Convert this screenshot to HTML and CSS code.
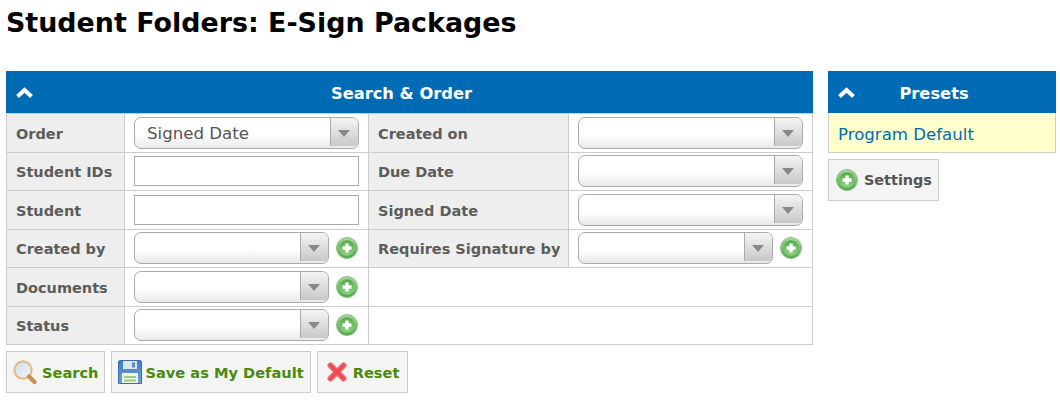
FILE: index.html
```html
<!DOCTYPE html>
<html lang="en">
<head>
<meta charset="utf-8">
<title>Student Folders: E-Sign Packages</title>
<link rel="stylesheet" href="styles.css">
</head>
<body>
<svg class="defs" width="0" height="0" aria-hidden="true">
  <defs>
    <linearGradient id="gr" x1="0" y1="0" x2="0" y2="1"><stop offset="0" stop-color="#a8d89e"/><stop offset="1" stop-color="#4fa548"/></linearGradient>
    <linearGradient id="gi" x1="0" y1="0" x2="0" y2="1"><stop offset="0" stop-color="#52ab48"/><stop offset="1" stop-color="#8fd283"/></linearGradient>
    <linearGradient id="lens" x1="0" y1="0" x2="1" y2="1"><stop offset="0" stop-color="#c9d9e8"/><stop offset="1" stop-color="#f7fafc"/></linearGradient>
    <linearGradient id="disk" x1="0" y1="0" x2="0" y2="1"><stop offset="0" stop-color="#3f7cc6"/><stop offset="1" stop-color="#6ea3dc"/></linearGradient>
    <symbol id="plus" viewBox="0 0 22 22">
      <circle cx="11" cy="11" r="10.500" fill="url(#gr)" stroke="#8cc084"/>
      <circle cx="11" cy="11" r="7.800" fill="url(#gi)"/>
      <path d="M11 6.500v9M6.500 11h9" stroke="#fff" stroke-width="3.400"/>
    </symbol>
    <symbol id="chev" viewBox="0 0 17 11">
      <path d="M1.500 9.500 8.500 3l7 6.500" fill="none" stroke="#fff" stroke-width="4"/>
    </symbol>
  </defs>
</svg>
<h1 class="title">Student Folders: E-Sign Packages</h1>
<div class="layout">
  <main class="main">
    <div class="head"><svg class="chev"><use href="#chev"/></svg><span>Search &amp; Order</span></div>
    <div class="form">
      <div class="lab">Order</div>
      <div class="val"><div class="sel"><span class="txt">Signed Date</span><span class="arr"></span></div></div>
      <div class="lab">Created on</div>
      <div class="val"><div class="sel"><span class="txt"></span><span class="arr"></span></div></div>

      <div class="lab">Student IDs</div>
      <div class="val"><input class="inp" type="text"></div>
      <div class="lab">Due Date</div>
      <div class="val"><div class="sel"><span class="txt"></span><span class="arr"></span></div></div>

      <div class="lab">Student</div>
      <div class="val"><input class="inp" type="text"></div>
      <div class="lab">Signed Date</div>
      <div class="val"><div class="sel"><span class="txt"></span><span class="arr"></span></div></div>

      <div class="lab">Created by</div>
      <div class="val"><div class="sel short"><span class="txt"></span><span class="arr"></span></div><svg class="plus"><use href="#plus"/></svg></div>
      <div class="lab">Requires Signature by</div>
      <div class="val"><div class="sel short"><span class="txt"></span><span class="arr"></span></div><svg class="plus"><use href="#plus"/></svg></div>

      <div class="lab">Documents</div>
      <div class="val"><div class="sel short"><span class="txt"></span><span class="arr"></span></div><svg class="plus"><use href="#plus"/></svg></div>
      <div class="val wide"></div>

      <div class="lab">Status</div>
      <div class="val"><div class="sel short"><span class="txt"></span><span class="arr"></span></div><svg class="plus"><use href="#plus"/></svg></div>
      <div class="val wide"></div>
    </div>
    <div class="actions">
      <a class="btn go">
        <svg class="ico" viewBox="0 0 24 25" width="24" height="25"><circle cx="10" cy="10" r="8.600" fill="url(#lens)" stroke="#e2bb8c" stroke-width="2.200"/><path d="M16 16.500l5.500 5.500" stroke="#c88f52" stroke-width="4.200" stroke-linecap="round"/></svg>
        <span class="lbl">Search</span></a>
      <a class="btn go save">
        <svg class="ico" viewBox="0 0 24 24" width="24" height="24"><path d="M1.500.5h21l1 1v22H.5V1.500z" fill="url(#disk)" stroke="#3a6cae"/><path d="M5 1h14v8H5z" fill="#dbe6f3"/><path d="M14 2.500h3v5h-3z" fill="#5a8cc8"/><path d="M4 13h16v10H4z" fill="#eef3e4"/><path d="M6 16h12v2H6zM6 19.500h12v2H6z" fill="#9fcb84"/></svg>
        <span class="lbl">Save as My Default</span></a>
      <a class="btn go reset">
        <svg class="ico" viewBox="0 0 20 20" width="20" height="20"><path d="M3.500 3.500l13 13M16.500 3.500l-13 13" stroke="#f0666c" stroke-width="6" stroke-linecap="round"/><path d="M3.500 3.500l13 13M16.500 3.500l-13 13" stroke="#ec4a52" stroke-width="3" stroke-linecap="round"/></svg>
        <span class="lbl">Reset</span></a>
    </div>
  </main>
  <aside class="side">
    <div class="head"><svg class="chev"><use href="#chev"/></svg><span>Presets</span></div>
    <div class="preset"><a class="plink">Program Default</a></div>
    <a class="btn setbtn"><svg class="plus"><use href="#plus"/></svg><span class="lbl">Settings</span></a>
  </aside>
</div>
</body>
</html>
```
FILE: styles.css
```css
* { box-sizing: border-box; }
html, body { margin: 0; background: #fff; }
body {
  width: 1060px;
  height: 400px;
  overflow: hidden;
  padding: 0 4px 0 6px;
  font-family: "DejaVu Sans", Verdana, sans-serif;
  font-size: 14.5px;
  color: #555;
}
.defs { position: absolute; }
.title {
  margin: 0;
  height: 71px;
  padding-top: 5px;
  font-size: 26.9px;
  line-height: 36px;
  font-weight: bold;
  color: #000;
}
.layout { display: flex; gap: 15px; align-items: flex-start; }
.main { width: 807px; }
.side { width: 228px; }
.head {
  position: relative;
  height: 42px;
  padding: 2px 16px 0 0;
  background: #006bb5;
  color: #fff;
  font-weight: bold;
  font-size: 16.3px;
  display: flex;
  align-items: center;
  justify-content: center;
}
.chev { position: absolute; left: 10px; top: 16px; width: 17px; height: 11px; }
.form {
  display: grid;
  grid-template-columns: 118px 244px 200px 244px;
  grid-auto-rows: 38.5px;
  border-left: 1px solid #ccc;
  border-top: 1px solid #ccc;
}
.lab, .val {
  border-right: 1px solid #ccc;
  border-bottom: 1px solid #ccc;
  display: flex;
  align-items: center;
}
.lab {
  background: #eee;
  font-weight: bold;
  padding: 2.4px 0 0 9px;
  color: #5c5c5c;
}
.val { padding-left: 9px; gap: 7px; }
.wide { grid-column: span 2; }
.sel {
  width: 225px;
  height: 32px;
  border: 1px solid #aaa;
  border-radius: 7px;
  background: linear-gradient(#fff 55%, #e9e9e9);
  display: flex;
  font-size: 16.6px;
  overflow: hidden;
  color: #555;
}
.sel.short { width: 195px; }
.txt { flex: 1; padding: 1px 0 0 12px; line-height: 30px; }
.arr {
  width: 28px;
  margin-bottom: 2px;
  border-left: 1px solid #aaa;
  background: linear-gradient(#f4f4f4, #c8c8c8);
  position: relative;
}
.arr::after {
  content: "";
  position: absolute;
  left: 7px;
  top: 12px;
  border-left: 6px solid transparent;
  border-right: 6px solid transparent;
  border-top: 7px solid #888;
}
.inp {
  display: block;
  width: 225px;
  height: 30px;
  border: 1px solid #aaa;
  background: #fff;
  padding: 0;
  margin: 0;
}
.plus { width: 22px; height: 22px; flex: none; }
.actions { display: flex; gap: 6px; margin-top: 6px; }
.btn {
  display: inline-flex;
  align-items: center;
  height: 42px;
  padding: 0 5px 0 6px;
  gap: 5px;
  background: #f4f4f4;
  border: 1px solid #ccc;
  font-weight: bold;
  font-size: 14.6px;
}
.go { color: #4b8a0b; }
.save { padding-right: 6px; gap: 4px; }
.reset { padding: 0 8px 0 9px; gap: 6px; }
.preset {
  height: 40px;
  padding: 4px 0 0 9px;
  background: #ffc;
  border: 1px solid #ccc;
  border-top: 0;
  display: flex;
  align-items: center;
  font-size: 16.6px;
}
.plink { color: #006bb5; }
.setbtn { margin-top: 6px; padding: 0 6px 0 7px; gap: 6px; color: #555; font-size: 14.4px; }
```
